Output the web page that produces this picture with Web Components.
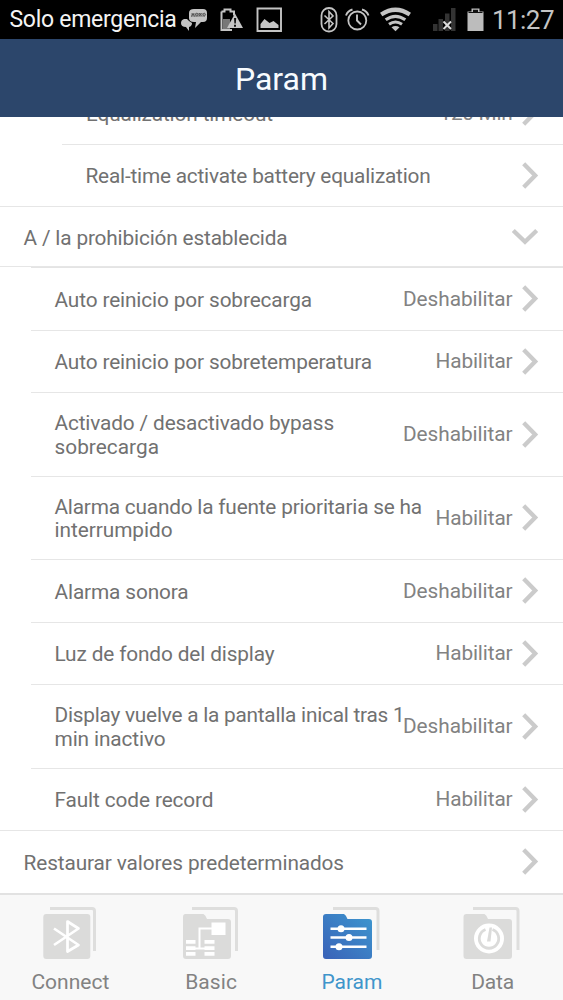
<!DOCTYPE html>
<html lang="es">
<head>
<meta charset="utf-8">
<title>Param</title>
<style>
html,body{margin:0;height:1000px;overflow:hidden;background:#fff;font-family:Roboto,"Liberation Sans",sans-serif}
</style>
</head>
<body>
<param-app></param-app>
<script>
function define(name, html, setup) {
  const template = document.createElement('template');
  template.innerHTML = html;
  customElements.define(name, class extends HTMLElement {
    connectedCallback() {
      if (this.shadowRoot) return;
      this.attachShadow({mode: 'open'}).appendChild(template.content.cloneNode(true));
      if (setup) setup(this, this.shadowRoot);
    }
  });
}

/* One line of text, tracked so that it spans the given width. */
define('text-line', `<style>
:host{display:block;white-space:nowrap}
span{display:inline-block}
</style><span><slot></slot></span>`, (el, root) => {
  const span = root.querySelector('span');
  const want = parseFloat(el.getAttribute('span'));
  const have = span.getBoundingClientRect().width;
  span.style.letterSpacing = ((want - have) / el.textContent.length) + 'px';
});

define('chevron-icon', `<style>
:host{display:block;width:17px;height:27px;margin-top:-1px}
:host([down]){width:27px;height:17px;margin-top:0}
svg{display:block}
.d{display:none}:host([down]) .r{display:none}:host([down]) .d{display:block}
path{fill:none;stroke:#cbcbcb;stroke-width:4.3}
</style>
<svg class="r" width="17" height="27"><path d="M1.7 1.8 13.2 13.5 1.7 25.2"/></svg>
<svg class="d" width="27" height="17"><path d="M1.3 2.5 13 13.700 24.700 2.500"/></svg>`);

define('status-bar', `<style>
:host{display:flex;height:39px;background:#000;color:#f4f4f4;align-items:center;box-sizing:border-box;padding:1px 9px 0 9px;font-size:23px;line-height:26px}
svg{display:block;flex:none}
.clock{color:#c4c4c4;font-size:26px;margin-left:6px}
.carrier{width:167px;position:relative;left:.5px}
</style>
<text-line class="carrier" span="167">Solo emergencia</text-line>
<svg width="387" height="38" viewBox="176 1 310 38" style="width:310px;margin-top:-1px">
 <g fill="#c4c4c4">
  <path d="M194 9h9q4 0 4 4v5q0 4-4 4h-2l-6 6 1-6h-2q-5 0-5-4v-5q0-4 5-4z"/>
  <path d="M184 19q-3 1-3 4 0 4 5 4l3 4 0-4q3-1 3-4l-3-2-2-2z"/>
  <path d="M191 13h14v4h-14z" fill="#999"/>
  <path d="M191.500 16.500l1.500-3 1.500 3m1-2a1.300 1.300 0 1 1 0 .1m3.500-1.600l2.500 3m0-3l-2.500 3m4-1.500a1.300 1.300 0 1 1 0 .1" fill="none" stroke="#444" stroke-width=".8"/>
  <path d="M221.500 11.500h3v-2h6v2h3.500v4M232 30h-10.500v-18.500" fill="none" stroke="#c4c4c4" stroke-width="2"/>
  <path d="M223 19h7v10h-7z" fill="#777"/>
  <path d="M235 13.500 243 28h-16z"/>
  <path d="M234 18h2.200l-.4 5.500h-1.400zM234 24.700h2v2h-2z" fill="#111"/>
  <path d="M257.500 8.500h23.500v22.500h-23.500z" fill="none" stroke="#c4c4c4" stroke-width="1.900"/>
  <path d="M260.500 28v-4l4-5 5 4 4-2 5 4v3z"/>
 </g>
 <g fill="none" stroke="#c4c4c4">
  <rect x="321.500" y="8" width="15" height="23.500" rx="7.500" stroke-width="1.800"/>
  <path d="M324.500 15.500l8.500 8-4 4.500v-16.500l4 4.500-8.500 8" stroke-width="1.600"/>
  <circle cx="357.300" cy="20.500" r="9" stroke-width="1.800"/>
  <path d="M357 14.500v6l4 4M346 15.500q1.500-4.500 6.500-6M368.500 15.500q-1.500-4.500-6.500-6" stroke-width="1.900"/>
  <path d="M381.200 14.500q14.300-9.500 28.600 0" stroke-width="4.200"/>
  <path d="M385.700 19.800q9.800-7 19.600 0" stroke-width="3.200"/>
  <path d="M389 24.300q6.500-4.500 13 0" stroke-width="3"/>
 </g>
 <path d="M391.500 27.300q4-2.500 8 0l-4 4z" fill="#c4c4c4"/>
 <path d="M433 24h4.500v7h-4.500zM438.500 19h4.500v12h-4.500zM445 13.500h4.500v17.500h-4.500zM451 8h4.500v23h-4.500z" fill="#333"/>
 <path d="M443.500 21.500l7.500 7.500m0-7.500l-7.500 7.500" stroke="#ddd" stroke-width="1.900"/>
 <path d="M467.500 11.500h4v-3h8v3h4v19.500h-16z" fill="#bcbcbc"/>
 <path d="M473 9.700h5v2.300h4.500v1h-14v-1h4.500z" fill="#111"/>
</svg>
<text-line class="clock" span="62">11:27</text-line>`);

define('title-bar', `<style>
:host{display:flex;height:78px;background:#2c466b;color:#f7fbff;align-items:center;justify-content:center;font-size:32px;line-height:36px;position:relative;z-index:1}
text-line{margin-top:2px}
</style><text-line span="93">Param</text-line>`);

/* A settings row: label in the default slot, current value in the "value" slot. */
define('setting-row', `<style>
:host{display:block;flex:none;color:#717171;font-size:20.800px;line-height:23.500px;box-sizing:border-box;padding-left:var(--line,0)}
.row{display:flex;align-items:center;height:100%;box-sizing:border-box;border-bottom:1px solid #e6e6e6;padding:0 24px 0 var(--inset,23.500px)}
.label{flex:1;min-width:0;padding-top:2.500px}
:host([open]) .label{padding-top:4px}
.value{color:#828282;margin-right:9.500px;padding-top:1px}
:host([level="1"]){--line:31px;--inset:23.500px}
:host([level="2"]){--line:62px;--inset:24px}
:host([last]){--line:0px;--inset:54.500px}
:host([last][level="2"]){--inset:85.500px}
:host([end]) .row{border-bottom:0}
</style><div class="row"><div class="label"><slot></slot></div><div class="value"><slot name="value"></slot></div><chevron-icon></chevron-icon></div>`, (el, root) => {
  el.style.height = el.getAttribute('h') + 'px';
  if (el.hasAttribute('open')) root.querySelector('chevron-icon').setAttribute('down', '');
});

define('setting-list', `<style>
:host{display:flex;flex-direction:column;height:776px;overflow:hidden;background:#fff}
::slotted(:first-child){margin-top:-35px}
</style><slot></slot>`);

define('tab-item', `<style>
:host{display:flex;flex:1;flex-direction:column;align-items:center;color:#828282;font-size:21px;line-height:24px}
:host([active]){color:#3f95cb}
</style><slot name="icon"></slot><slot></slot>`);

define('tab-bar', `<style>
:host{display:flex;height:107px;box-sizing:border-box;border-top:2px solid #e2e2e2;background:#f8f8f8;padding-top:10px}
svg{display:block;width:60px;height:56px;margin-bottom:9px}
.back{fill:none;stroke:#dededd;stroke-width:3}
.body{fill:#dbdbda}
.w{fill:none;stroke:#fff}
.f{fill:#fff}
</style>
<tab-item><svg slot="icon" viewBox="40 905 60 56">
 <path class="back" d="M90 908.500H50M50 908.500H92q2.500 0 2.500 2.500v40"/>
 <rect class="body" x="43.300" y="914" width="47" height="45" rx="3"/>
 <path class="w" stroke-width="2.700" stroke-linejoin="round" d="M54 928.500 78.500 945 67.500 951.500V921.500L78.500 928.500 54 945"/>
</svg><text-line span="78">Connect</text-line></tab-item>
<tab-item><svg slot="icon" viewBox="181 905 60 56">
 <path class="back" d="M192 908.500h42q2.500 0 2.500 2.500v40"/>
 <path class="body" d="M185.500 914h18q2 1 3.500 5h21q3 0 3 3v34q0 3-3 3h-42q-3 0-3-3v-39q0-3 2.500-3z"/>
 <path class="w" stroke-width="2" d="M214 928.500h-14.500V949M191 948.500h20"/>
 <path class="f" d="M211.500 922.500h14v12.500h-14zM186 940h9.500v3.800H186zM186 946.200h9.500v3.800H186zM186 952h9.500v3.800H186zM204.500 940h10v3.800h-10zM204.500 946.200h10v3.800h-10zM204.500 952h10v3.800h-10z"/>
</svg><text-line span="52">Basic</text-line></tab-item>
<tab-item active><svg slot="icon" viewBox="322 905 60 56">
 <defs><linearGradient id="g" x1="0" y1="1" x2="1" y2="0"><stop stop-color="#3a62b8"/><stop offset="1" stop-color="#3d97cf"/></linearGradient></defs>
 <path class="back" d="M333 908.500h42.500q2.500 0 2.500 2.500v39"/>
 <path fill="url(#g)" d="M326 914h18q2 1 3.500 5h21.500q3 0 3 3v34q0 3-3 3h-43q-3 0-3-3v-39q0-3 3-3z"/>
 <path class="w" stroke-width="2.400" d="M330.500 928.700h36M330.500 937.500h36M330.500 946.800h36"/>
 <g class="f"><circle cx="341" cy="928.700" r="3.500"/><circle cx="349" cy="937.500" r="3.500"/><circle cx="339" cy="946.800" r="3.500"/></g>
</svg><text-line span="61">Param</text-line></tab-item>
<tab-item><svg slot="icon" viewBox="463 905 60 56">
 <path class="back" d="M473 908.500h42.500q2.500 0 2.500 2.500v39"/>
 <path class="body" d="M466.500 914h18q2 1 3.500 5h21q3 0 3 3v34q0 3-3 3h-42.500q-3 0-3-3v-39q0-3 3-3z"/>
 <circle class="f" cx="489" cy="938.500" r="15"/>
 <path fill="none" stroke="#dbdbda" stroke-width="2.800" d="M485.500 929.500a9.700 9.700 0 1 0 7 0"/>
 <path d="M489.500 927.500h2.500l-1.500 14h-3.500z" fill="#dbdbda"/>
</svg><text-line span="43">Data</text-line></tab-item>`);

define('param-app', `<style>
:host{display:block;width:563px;height:1000px;overflow:hidden}
.rule{flex:none;height:1px;margin-left:31px;background:#e4e4e4}
</style>
<status-bar></status-bar>
<title-bar></title-bar>
<setting-list>
<setting-row h="63" level="2"><text-line span="187">Equalization timeout</text-line><text-line slot="value" span="73">120 Min</text-line></setting-row>
<setting-row h="62" level="2" last><text-line span="345">Real-time activate battery equalization</text-line></setting-row>
<setting-row h="60" open><text-line span="264">A / la prohibición establecida</text-line></setting-row>
<div class="rule"></div>
<setting-row h="63" level="1"><text-line span="257.5">Auto reinicio por sobrecarga</text-line><text-line slot="value" span="109.5">Deshabilitar</text-line></setting-row>
<setting-row h="62" level="1"><text-line span="317.5">Auto reinicio por sobretemperatura</text-line><text-line slot="value" span="77">Habilitar</text-line></setting-row>
<setting-row h="84" level="1"><text-line span="279.5">Activado / desactivado bypass</text-line><text-line span="104.5">sobrecarga</text-line><text-line slot="value" span="109.5">Deshabilitar</text-line></setting-row>
<setting-row h="83" level="1"><text-line span="367.5">Alarma cuando la fuente prioritaria se ha</text-line><text-line span="118">interrumpido</text-line><text-line slot="value" span="77">Habilitar</text-line></setting-row>
<setting-row h="63" level="1"><text-line span="134">Alarma sonora</text-line><text-line slot="value" span="109.5">Deshabilitar</text-line></setting-row>
<setting-row h="62" level="1"><text-line span="220">Luz de fondo del display</text-line><text-line slot="value" span="77">Habilitar</text-line></setting-row>
<setting-row h="84" level="1"><text-line span="350">Display vuelve a la pantalla inical tras 1</text-line><text-line span="111">min inactivo</text-line><text-line slot="value" span="109.5">Deshabilitar</text-line></setting-row>
<setting-row h="62" level="1" last><text-line span="159">Fault code record</text-line><text-line slot="value" span="77">Habilitar</text-line></setting-row>
<setting-row h="62" end><text-line span="320.5">Restaurar valores predeterminados</text-line></setting-row>
</setting-list>
<tab-bar></tab-bar>`);
</script>
</body>
</html>
